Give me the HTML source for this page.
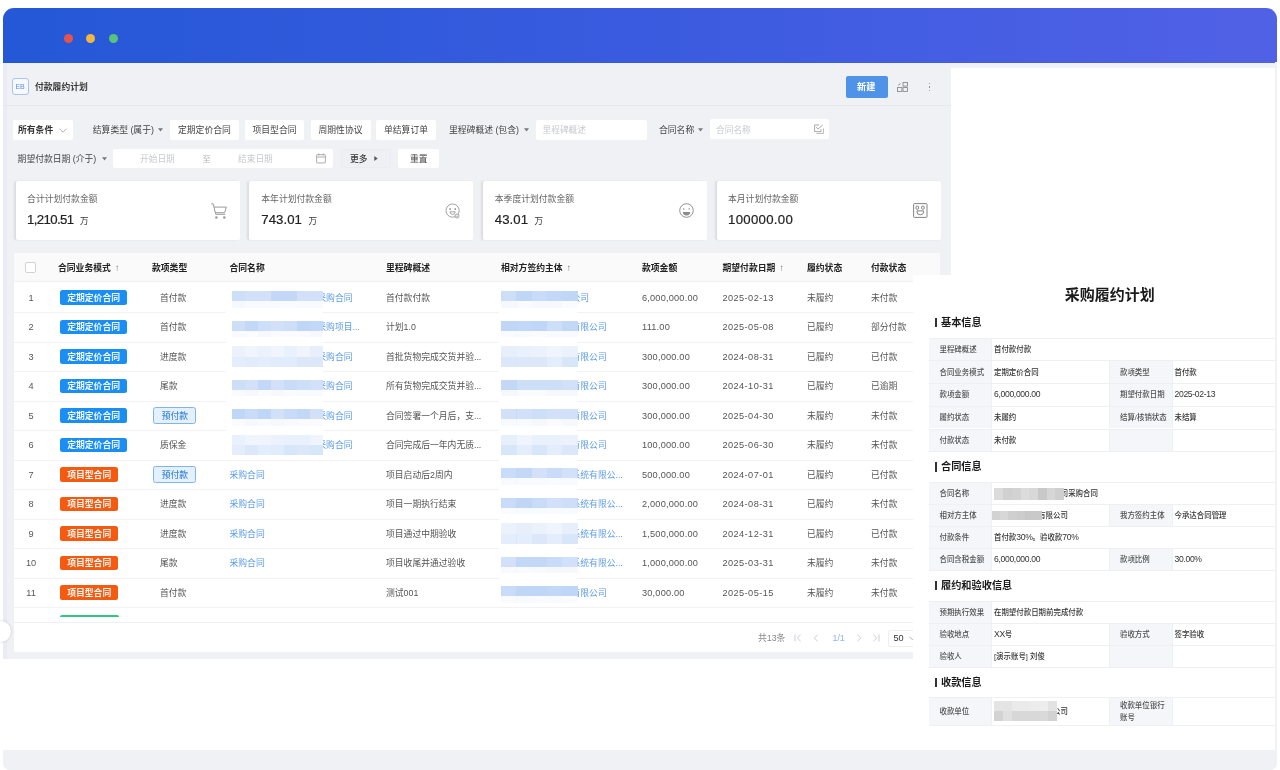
<!DOCTYPE html><html lang="zh-CN"><head><meta charset="utf-8"><title>付款履约计划</title><style>
*{box-sizing:border-box;margin:0;padding:0}
html,body{width:1280px;height:770px;overflow:hidden;background:#fff}
body{position:relative;filter:blur(0.35px);font-family:"Liberation Sans","Noto Sans CJK SC",sans-serif;font-size:8.8px;color:#555}
.t{position:absolute;white-space:nowrap}
.r{position:absolute}
svg{position:absolute;overflow:visible}
</style></head><body>
<div class="r" style="left:3px;top:8px;width:1274px;height:762px;background:#f1f2f6;border-radius:11px 11px 7px 7px;overflow:hidden"></div>
<div class="r" style="left:3px;top:8px;width:1274px;height:54.5px;background:linear-gradient(90deg,#2458d6 0%,#3a5bdf 50%,#5161e6 100%);border-radius:11px 11px 0 0"></div>
<div class="r" style="left:63.5px;top:33.5px;width:9px;height:9px;background:#e5544b;border-radius:50%"></div>
<div class="r" style="left:86.0px;top:33.5px;width:9px;height:9px;background:#f2b740;border-radius:50%"></div>
<div class="r" style="left:108.5px;top:33.5px;width:9px;height:9px;background:#5bc27a;border-radius:50%"></div>
<div class="r" style="left:951px;top:68px;width:324px;height:682px;background:#fff;"></div>
<div class="r" style="left:3px;top:659px;width:949px;height:91px;background:#fff;"></div>
<div class="r" style="left:3px;top:62.5px;width:948px;height:596.5px;background:#f0f1f5;"></div>
<div class="r" style="left:3px;top:62.5px;width:3.8px;height:596.5px;background:#eaebf6;"></div>
<div class="r" style="left:3px;top:750px;width:1274px;height:20px;background:#f0f1f5;border-radius:0 0 7px 7px"></div>
<div class="r" style="left:12px;top:78px;width:17px;height:17px;background:#f7f9fe;border:1px solid #a9c4ee;border-radius:3px"></div>
<div class="t " style="left:15.6px;top:81.60px;font-size:7px;color:#5b8fe6;font-weight:400;line-height:10px;letter-spacing:-0.2px">EB</div>
<div class="t " style="left:35px;top:79.80px;font-size:8.8px;color:#3c3c3c;font-weight:700;line-height:14px;">付款履约计划</div>
<div class="r" style="left:3px;top:105px;width:948px;height:1px;background:#e6e8ee;"></div>
<div class="r" style="left:845.5px;top:76px;width:42px;height:21.5px;background:#4f93e8;border-radius:2px"></div>
<div class="t " style="left:857px;top:79.60px;font-size:9.200000000000001px;color:#fff;font-weight:700;line-height:14px;">新建</div>
<svg style="left:897px;top:82px" width="11" height="10" viewBox="0 0 11 10" fill="none" stroke="#808080" stroke-width="0.8"><rect x="6" y="0.5" width="4.4" height="3.6"/><rect x="0.5" y="5.6" width="4.4" height="3.8"/><rect x="6" y="5.6" width="4.4" height="3.8"/><path d="M1 3.4 L3.6 1.6"/></svg>
<div class="r" style="left:928.6px;top:83.0px;width:1.3px;height:1.3px;background:#888;border-radius:50%"></div>
<div class="r" style="left:928.6px;top:86.4px;width:1.3px;height:1.3px;background:#888;border-radius:50%"></div>
<div class="r" style="left:928.6px;top:89.80000000000001px;width:1.3px;height:1.3px;background:#888;border-radius:50%"></div>
<div class="r" style="left:13px;top:119.8px;width:60px;height:19.8px;background:#fff;border-radius:2px;"></div>
<div class="t " style="left:18px;top:122.80px;font-size:8.8px;color:#333;font-weight:700;line-height:14px;">所有条件</div>
<svg style="left:58.5px;top:127.6px" width="8" height="5" viewBox="0 0 8 5" fill="none" stroke="#aaa" stroke-width="0.9"><path d="M0.5 0.7 L4 4.2 L7.5 0.7"/></svg>
<div class="t " style="left:92.8px;top:122.80px;font-size:8.8px;color:#444;font-weight:400;line-height:14px;">结算类型 (属于)</div>
<svg style="left:158px;top:128.2px" width="5" height="4" viewBox="0 0 5 4"><path d="M0 0.3h5L2.5 3.6z" fill="#777"/></svg>
<div class="r" style="left:170px;top:119.8px;width:68.5px;height:19.8px;background:#fff;border-radius:2px;"></div>
<div class="t " style="left:178px;top:122.80px;font-size:8.8px;color:#444;font-weight:400;line-height:14px;">定期定价合同</div>
<div class="r" style="left:244.5px;top:119.8px;width:59.5px;height:19.8px;background:#fff;border-radius:2px;"></div>
<div class="t " style="left:252.5px;top:122.80px;font-size:8.8px;color:#444;font-weight:400;line-height:14px;">项目型合同</div>
<div class="r" style="left:310.5px;top:119.8px;width:60px;height:19.8px;background:#fff;border-radius:2px;"></div>
<div class="t " style="left:318.5px;top:122.80px;font-size:8.8px;color:#444;font-weight:400;line-height:14px;">周期性协议</div>
<div class="r" style="left:376px;top:119.8px;width:60px;height:19.8px;background:#fff;border-radius:2px;"></div>
<div class="t " style="left:384px;top:122.80px;font-size:8.8px;color:#444;font-weight:400;line-height:14px;">单结算订单</div>
<div class="t " style="left:449px;top:122.80px;font-size:8.8px;color:#444;font-weight:400;line-height:14px;">里程碑概述 (包含)</div>
<svg style="left:524px;top:128.2px" width="5" height="4" viewBox="0 0 5 4"><path d="M0 0.3h5L2.5 3.6z" fill="#777"/></svg>
<div class="r" style="left:536px;top:119.8px;width:110.5px;height:19.8px;background:#fff;border-radius:2px;"></div>
<div class="t " style="left:542.5px;top:122.80px;font-size:8.700000000000001px;color:#c6c9cf;font-weight:400;line-height:14px;">里程碑概述</div>
<div class="t " style="left:659px;top:122.80px;font-size:8.8px;color:#444;font-weight:400;line-height:14px;">合同名称</div>
<svg style="left:698px;top:128.2px" width="5" height="4" viewBox="0 0 5 4"><path d="M0 0.3h5L2.5 3.6z" fill="#777"/></svg>
<div class="r" style="left:710px;top:119.4px;width:119px;height:19.4px;background:#fff;border-radius:2px;"></div>
<div class="t " style="left:716px;top:122.80px;font-size:8.700000000000001px;color:#c6c9cf;font-weight:400;line-height:14px;">合同名称</div>
<svg style="left:813.8px;top:123.6px" width="10" height="10" viewBox="0 0 10 10" fill="none" stroke="#a0a0a0" stroke-width="0.9"><path d="M7 5.2V7.6H0.6V0.9H5"/><path d="M2.2 3.2l1.7 2L8.6 1"/><path d="M2.4 9.4h7V4.4" stroke="#b0b0b0"/></svg>
<div class="t " style="left:17.6px;top:151.50px;font-size:8.8px;color:#444;font-weight:400;line-height:14px;">期望付款日期 (介于)</div>
<svg style="left:101.5px;top:157.2px" width="5" height="4" viewBox="0 0 5 4"><path d="M0 0.3h5L2.5 3.6z" fill="#777"/></svg>
<div class="r" style="left:113.4px;top:148.8px;width:219.4px;height:19.3px;background:#fff;border-radius:2px;"></div>
<div class="t " style="left:140px;top:151.50px;font-size:8.700000000000001px;color:#c6c9cf;font-weight:400;line-height:14px;">开始日期</div>
<div class="t " style="left:202.5px;top:151.50px;font-size:8.4px;color:#b0b3b9;font-weight:400;line-height:14px;">至</div>
<div class="t " style="left:238px;top:151.50px;font-size:8.700000000000001px;color:#c6c9cf;font-weight:400;line-height:14px;">结束日期</div>
<svg style="left:316px;top:153.4px" width="10" height="10.6" viewBox="0 0 10 10.6" fill="none" stroke="#999" stroke-width="0.8"><rect x="0.6" y="1.7" width="8.8" height="8.2" rx="0.6"/><path d="M0.6 4h8.8M2.8 0.4v2M7.2 0.4v2"/></svg>
<div class="r" style="left:341px;top:148.8px;width:50px;height:19.3px;background:#eff0f4;border-radius:2px;border:1px solid #eaecf1"></div>
<div class="t " style="left:350px;top:151.50px;font-size:8.8px;color:#3a3a3a;font-weight:500;line-height:14px;">更多</div>
<svg style="left:374px;top:156.4px" width="4" height="5" viewBox="0 0 4 5"><path d="M0.3 0L3.7 2.5L0.3 5z" fill="#555"/></svg>
<div class="r" style="left:398px;top:148.8px;width:41px;height:19.3px;background:#fff;border-radius:2px;"></div>
<div class="t " style="left:410px;top:151.50px;font-size:8.8px;color:#444;font-weight:400;line-height:14px;">重置</div>
<div class="r" style="left:15.6px;top:180.8px;width:224.4px;height:59.6px;background:#fff;border-radius:2px;box-shadow:-2px 0 2px -0.5px rgba(0,0,0,0.085)"></div>
<div class="t " style="left:27.1px;top:192.00px;font-size:8.8px;color:#666;font-weight:400;line-height:14px;">合计计划付款金额</div>
<div class="t" style="left:27.1px;top:211px;font-size:13.2px;color:#222;line-height:18px"><span style="letter-spacing:-0.62px;-webkit-text-stroke:0.2px #222">1,210.51</span><span style="font-size:8.6px;margin-left:6.5px;color:#333">万</span></div>
<div class="r" style="left:249px;top:180.8px;width:224.4px;height:59.6px;background:#fff;border-radius:2px;box-shadow:-2px 0 2px -0.5px rgba(0,0,0,0.085)"></div>
<div class="t " style="left:261.3px;top:192.00px;font-size:8.8px;color:#666;font-weight:400;line-height:14px;">本年计划付款金额</div>
<div class="t" style="left:261.3px;top:211px;font-size:13.2px;color:#222;line-height:18px"><span style="letter-spacing:0.05px;-webkit-text-stroke:0.2px #222">743.01</span><span style="font-size:8.6px;margin-left:6.5px;color:#333">万</span></div>
<div class="r" style="left:482.5px;top:180.8px;width:224.4px;height:59.6px;background:#fff;border-radius:2px;box-shadow:-2px 0 2px -0.5px rgba(0,0,0,0.085)"></div>
<div class="t " style="left:494.8px;top:192.00px;font-size:8.8px;color:#666;font-weight:400;line-height:14px;">本季度计划付款金额</div>
<div class="t" style="left:494.8px;top:211px;font-size:13.2px;color:#222;line-height:18px"><span style="letter-spacing:0.05px;-webkit-text-stroke:0.2px #222">43.01</span><span style="font-size:8.6px;margin-left:6.5px;color:#333">万</span></div>
<div class="r" style="left:716.5px;top:180.8px;width:224.4px;height:59.6px;background:#fff;border-radius:2px;box-shadow:-2px 0 2px -0.5px rgba(0,0,0,0.085)"></div>
<div class="t " style="left:728.0px;top:192.00px;font-size:8.8px;color:#666;font-weight:400;line-height:14px;">本月计划付款金额</div>
<div class="t" style="left:728.0px;top:211px;font-size:13.2px;color:#222;line-height:18px"><span style="letter-spacing:0.3px;-webkit-text-stroke:0.2px #222">100000.00</span><span style="font-size:8.6px;margin-left:6.5px;color:#333"></span></div>
<svg style="left:210.5px;top:203px" width="16" height="16" viewBox="0 0 16 16" fill="none" stroke="#9a9a9a" stroke-width="1"><path d="M0.2 0.8h1.9l2.7 10.5h9.4"/><path d="M3 4.1h12.4l-1.8 5.6H4.4"/><circle cx="5.4" cy="14.6" r="1.25" fill="#9a9a9a" stroke="none"/><circle cx="13.3" cy="14.6" r="1.25" fill="#9a9a9a" stroke="none"/></svg>
<svg style="left:444.5px;top:202.5px" width="16" height="16" viewBox="0 0 16 16" fill="none" stroke="#9a9a9a" stroke-width="0.9"><circle cx="7.6" cy="7.6" r="6.6"/><path d="M5 8.8a2.6 2.6 0 0 0 5.2 0z"/><circle cx="5.1" cy="6" r="0.85" fill="#777" stroke="none"/><circle cx="10.2" cy="6" r="0.85" fill="#777" stroke="none"/><circle cx="12" cy="13" r="2" fill="#fff"/><circle cx="12" cy="13.2" r="0.6" fill="#888" stroke="none"/></svg>
<svg style="left:678.5px;top:202.8px" width="15" height="15" viewBox="0 0 15 15" fill="none" stroke="#8c8c8c" stroke-width="0.95"><circle cx="7.5" cy="7.5" r="6.8"/><path d="M3.8 9a3.7 3.4 0 0 0 7.4 0z" fill="#8c8c8c" stroke="none"/><circle cx="4.7" cy="5.9" r="0.7" fill="#777" stroke="none"/><circle cx="10.2" cy="5.9" r="0.7" fill="#777" stroke="none"/></svg>
<svg style="left:912.6px;top:203.3px" width="15" height="15" viewBox="0 0 15 15" fill="none" stroke="#7d7d7d" stroke-width="0.95"><rect x="0.6" y="0.6" width="13.4" height="13.8" rx="0.8"/><rect x="3" y="3.2" width="2.6" height="3" rx="0.8"/><rect x="8.6" y="3.2" width="2.6" height="3" rx="0.8"/><path d="M4 7.9h6.6v1.1a3.3 2.8 0 0 1-6.6 0z"/></svg>
<div class="r" style="left:13.5px;top:253px;width:926.5px;height:399px;background:#fff;border-radius:2px"></div>
<div class="r" style="left:13.5px;top:253px;width:926.5px;height:28.3px;background:#fafafa;"></div>
<div class="r" style="left:13.5px;top:281.2px;width:926.5px;height:1px;background:#f1f1f4;"></div>
<div class="r" style="left:25px;top:262px;width:10.8px;height:10.8px;background:#fff;border:1px solid #cfd2d8;border-radius:2px"></div>
<div class="t " style="left:58px;top:261.00px;font-size:8.8px;color:#222;font-weight:700;line-height:14px;">合同业务模式<span style="font-weight:400;color:#888;margin-left:4px;font-size:9.5px;color:#777">↑</span></div>
<div class="t " style="left:152px;top:261.00px;font-size:8.8px;color:#222;font-weight:700;line-height:14px;">款项类型</div>
<div class="t " style="left:229.5px;top:261.00px;font-size:8.8px;color:#222;font-weight:700;line-height:14px;">合同名称</div>
<div class="t " style="left:386px;top:261.00px;font-size:8.8px;color:#222;font-weight:700;line-height:14px;">里程碑概述</div>
<div class="t " style="left:501px;top:261.00px;font-size:8.8px;color:#222;font-weight:700;line-height:14px;">相对方签约主体<span style="font-weight:400;color:#888;margin-left:4px;font-size:9.5px;color:#777">↑</span></div>
<div class="t " style="left:642px;top:261.00px;font-size:8.8px;color:#222;font-weight:700;line-height:14px;">款项金额</div>
<div class="t " style="left:722.5px;top:261.00px;font-size:8.8px;color:#222;font-weight:700;line-height:14px;">期望付款日期<span style="font-weight:400;color:#888;margin-left:4px;font-size:9.5px;color:#777">↑</span></div>
<div class="t " style="left:807px;top:261.00px;font-size:8.8px;color:#222;font-weight:700;line-height:14px;">履约状态</div>
<div class="t " style="left:871px;top:261.00px;font-size:8.8px;color:#222;font-weight:700;line-height:14px;">付款状态</div>
<div class="r" style="left:13.5px;top:312.2px;width:926.5px;height:1px;background:#f2f2f5;"></div>
<div class="t " style="left:31px;top:290.80px;font-size:9.2px;color:#555;font-weight:400;line-height:14px;transform:translateX(-50%)">1</div>
<div class="r" style="left:60px;top:290.40000000000003px;width:67.3px;height:14.4px;background:#1a8ef2;border-radius:2.5px"></div>
<div class="t " style="left:67.2px;top:290.60px;font-size:8.8px;color:rgba(255,255,255,0.93);font-weight:700;line-height:14px;">定期定价合同</div>
<div class="t " style="left:160px;top:290.80px;font-size:8.8px;color:#555;font-weight:400;line-height:14px;">首付款</div>
<div class="t " style="left:317.3px;top:290.80px;font-size:8.8px;color:#5b9bea;font-weight:400;line-height:14px;">采购合同</div>
<div class="r" style="left:226px;top:283.8px;width:97.2px;height:29.4px;background:#fff;"></div>
<div class="r" style="left:232.0px;top:291.2px;width:13.3px;height:10.2px;background:rgba(192,214,247,0.8);"></div>
<div class="r" style="left:232.0px;top:301.40000000000003px;width:13.3px;height:6.4px;background:rgba(238,243,252,0.6);"></div>
<div class="r" style="left:245.0px;top:291.2px;width:13.3px;height:10.2px;background:rgba(192,214,247,0.72);"></div>
<div class="r" style="left:245.0px;top:301.40000000000003px;width:13.3px;height:6.4px;background:rgba(238,243,252,0.45);"></div>
<div class="r" style="left:258.0px;top:291.2px;width:13.3px;height:10.2px;background:rgba(192,214,247,0.72);"></div>
<div class="r" style="left:258.0px;top:301.40000000000003px;width:13.3px;height:6.4px;background:rgba(238,243,252,0.45);"></div>
<div class="r" style="left:271.0px;top:291.2px;width:13.3px;height:10.2px;background:rgba(192,214,247,0.95);"></div>
<div class="r" style="left:271.0px;top:301.40000000000003px;width:13.3px;height:6.4px;background:rgba(238,243,252,0.45);"></div>
<div class="r" style="left:284.0px;top:291.2px;width:13.3px;height:10.2px;background:rgba(192,214,247,0.95);"></div>
<div class="r" style="left:284.0px;top:301.40000000000003px;width:13.3px;height:6.4px;background:rgba(238,243,252,0.3);"></div>
<div class="r" style="left:297.0px;top:291.2px;width:13.3px;height:10.2px;background:rgba(192,214,247,0.72);"></div>
<div class="r" style="left:297.0px;top:301.40000000000003px;width:13.3px;height:6.4px;background:rgba(238,243,252,0.45);"></div>
<div class="r" style="left:310.0px;top:291.2px;width:13.3px;height:10.2px;background:rgba(192,214,247,0.72);"></div>
<div class="r" style="left:310.0px;top:301.40000000000003px;width:13.3px;height:6.4px;background:rgba(238,243,252,0.45);"></div>
<div class="t " style="left:386px;top:290.80px;font-size:8.8px;color:#555;font-weight:400;line-height:14px;">首付款付款</div>
<div class="t " style="left:571.5px;top:290.80px;font-size:8.8px;color:#5b9bea;font-weight:400;line-height:14px;">公司</div>
<div class="r" style="left:499px;top:283.8px;width:78.3px;height:29.4px;background:#fff;"></div>
<div class="r" style="left:501.0px;top:291.2px;width:15.56px;height:10.2px;background:rgba(192,214,247,0.8);"></div>
<div class="r" style="left:501.0px;top:301.40000000000003px;width:15.56px;height:6.4px;background:rgba(238,243,252,0.6);"></div>
<div class="r" style="left:516.26px;top:291.2px;width:15.56px;height:10.2px;background:rgba(192,214,247,1.0);"></div>
<div class="r" style="left:516.26px;top:301.40000000000003px;width:15.56px;height:6.4px;background:rgba(238,243,252,0.3);"></div>
<div class="r" style="left:531.52px;top:291.2px;width:15.56px;height:10.2px;background:rgba(192,214,247,0.88);"></div>
<div class="r" style="left:531.52px;top:301.40000000000003px;width:15.56px;height:6.4px;background:rgba(238,243,252,0.6);"></div>
<div class="r" style="left:546.78px;top:291.2px;width:15.56px;height:10.2px;background:rgba(192,214,247,0.95);"></div>
<div class="r" style="left:546.78px;top:301.40000000000003px;width:15.56px;height:6.4px;background:rgba(238,243,252,0.6);"></div>
<div class="r" style="left:562.04px;top:291.2px;width:15.56px;height:10.2px;background:rgba(192,214,247,1.0);"></div>
<div class="r" style="left:562.04px;top:301.40000000000003px;width:15.56px;height:6.4px;background:rgba(238,243,252,0.3);"></div>
<div class="t " style="left:642px;top:290.80px;font-size:9.2px;color:#555;font-weight:400;line-height:14px;letter-spacing:0.2px">6,000,000.00</div>
<div class="t " style="left:722.5px;top:290.80px;font-size:9.2px;color:#555;font-weight:400;line-height:14px;letter-spacing:0.42px">2025-02-13</div>
<div class="t " style="left:807px;top:290.80px;font-size:8.8px;color:#555;font-weight:400;line-height:14px;">未履约</div>
<div class="t " style="left:871px;top:290.80px;font-size:8.8px;color:#555;font-weight:400;line-height:14px;">未付款</div>
<div class="r" style="left:13.5px;top:341.7px;width:926.5px;height:1px;background:#f2f2f5;"></div>
<div class="t " style="left:31px;top:320.30px;font-size:9.2px;color:#555;font-weight:400;line-height:14px;transform:translateX(-50%)">2</div>
<div class="r" style="left:60px;top:319.90000000000003px;width:67.3px;height:14.4px;background:#1a8ef2;border-radius:2.5px"></div>
<div class="t " style="left:67.2px;top:320.10px;font-size:8.8px;color:rgba(255,255,255,0.93);font-weight:700;line-height:14px;">定期定价合同</div>
<div class="t " style="left:160px;top:320.30px;font-size:8.8px;color:#555;font-weight:400;line-height:14px;">首付款</div>
<div class="t " style="left:317.3px;top:320.30px;font-size:8.8px;color:#5b9bea;font-weight:400;line-height:14px;">采购项目...</div>
<div class="r" style="left:226px;top:313.3px;width:97.2px;height:29.4px;background:#fff;"></div>
<div class="r" style="left:232.0px;top:320.7px;width:13.3px;height:10.2px;background:rgba(192,214,247,0.8);"></div>
<div class="r" style="left:232.0px;top:330.90000000000003px;width:13.3px;height:6.4px;background:rgba(238,243,252,0.45);"></div>
<div class="r" style="left:245.0px;top:320.7px;width:13.3px;height:10.2px;background:rgba(192,214,247,0.95);"></div>
<div class="r" style="left:245.0px;top:330.90000000000003px;width:13.3px;height:6.4px;background:rgba(238,243,252,0.3);"></div>
<div class="r" style="left:258.0px;top:320.7px;width:13.3px;height:10.2px;background:rgba(192,214,247,0.8);"></div>
<div class="r" style="left:258.0px;top:330.90000000000003px;width:13.3px;height:6.4px;background:rgba(238,243,252,0.6);"></div>
<div class="r" style="left:271.0px;top:320.7px;width:13.3px;height:10.2px;background:rgba(192,214,247,0.72);"></div>
<div class="r" style="left:271.0px;top:330.90000000000003px;width:13.3px;height:6.4px;background:rgba(238,243,252,0.3);"></div>
<div class="r" style="left:284.0px;top:320.7px;width:13.3px;height:10.2px;background:rgba(192,214,247,0.8);"></div>
<div class="r" style="left:284.0px;top:330.90000000000003px;width:13.3px;height:6.4px;background:rgba(238,243,252,0.3);"></div>
<div class="r" style="left:297.0px;top:320.7px;width:13.3px;height:10.2px;background:rgba(192,214,247,1.0);"></div>
<div class="r" style="left:297.0px;top:330.90000000000003px;width:13.3px;height:6.4px;background:rgba(238,243,252,0.3);"></div>
<div class="r" style="left:310.0px;top:320.7px;width:13.3px;height:10.2px;background:rgba(192,214,247,0.95);"></div>
<div class="r" style="left:310.0px;top:330.90000000000003px;width:13.3px;height:6.4px;background:rgba(238,243,252,0.6);"></div>
<div class="t " style="left:386px;top:320.30px;font-size:8.8px;color:#555;font-weight:400;line-height:14px;">计划1.0</div>
<div class="t " style="left:571.5px;top:320.30px;font-size:8.8px;color:#5b9bea;font-weight:400;line-height:14px;">有限公司</div>
<div class="r" style="left:499px;top:313.3px;width:78.3px;height:29.4px;background:#fff;"></div>
<div class="r" style="left:501.0px;top:320.7px;width:15.56px;height:10.2px;background:rgba(192,214,247,1.0);"></div>
<div class="r" style="left:501.0px;top:330.90000000000003px;width:15.56px;height:6.4px;background:rgba(238,243,252,0.3);"></div>
<div class="r" style="left:516.26px;top:320.7px;width:15.56px;height:10.2px;background:rgba(192,214,247,0.95);"></div>
<div class="r" style="left:516.26px;top:330.90000000000003px;width:15.56px;height:6.4px;background:rgba(238,243,252,0.45);"></div>
<div class="r" style="left:531.52px;top:320.7px;width:15.56px;height:10.2px;background:rgba(192,214,247,1.0);"></div>
<div class="r" style="left:531.52px;top:330.90000000000003px;width:15.56px;height:6.4px;background:rgba(238,243,252,0.3);"></div>
<div class="r" style="left:546.78px;top:320.7px;width:15.56px;height:10.2px;background:rgba(192,214,247,0.8);"></div>
<div class="r" style="left:546.78px;top:330.90000000000003px;width:15.56px;height:6.4px;background:rgba(238,243,252,0.45);"></div>
<div class="r" style="left:562.04px;top:320.7px;width:15.56px;height:10.2px;background:rgba(192,214,247,0.95);"></div>
<div class="r" style="left:562.04px;top:330.90000000000003px;width:15.56px;height:6.4px;background:rgba(238,243,252,0.45);"></div>
<div class="t " style="left:642px;top:320.30px;font-size:9.2px;color:#555;font-weight:400;line-height:14px;letter-spacing:0.2px">111.00</div>
<div class="t " style="left:722.5px;top:320.30px;font-size:9.2px;color:#555;font-weight:400;line-height:14px;letter-spacing:0.42px">2025-05-08</div>
<div class="t " style="left:807px;top:320.30px;font-size:8.8px;color:#555;font-weight:400;line-height:14px;">已履约</div>
<div class="t " style="left:871px;top:320.30px;font-size:8.8px;color:#555;font-weight:400;line-height:14px;">部分付款</div>
<div class="r" style="left:13.5px;top:371.2px;width:926.5px;height:1px;background:#f2f2f5;"></div>
<div class="t " style="left:31px;top:349.80px;font-size:9.2px;color:#555;font-weight:400;line-height:14px;transform:translateX(-50%)">3</div>
<div class="r" style="left:60px;top:349.40000000000003px;width:67.3px;height:14.4px;background:#1a8ef2;border-radius:2.5px"></div>
<div class="t " style="left:67.2px;top:349.60px;font-size:8.8px;color:rgba(255,255,255,0.93);font-weight:700;line-height:14px;">定期定价合同</div>
<div class="t " style="left:160px;top:349.80px;font-size:8.8px;color:#555;font-weight:400;line-height:14px;">进度款</div>
<div class="t " style="left:317.3px;top:349.80px;font-size:8.8px;color:#5b9bea;font-weight:400;line-height:14px;">采购合同</div>
<div class="r" style="left:226px;top:342.8px;width:97.2px;height:29.4px;background:#fff;"></div>
<div class="r" style="left:232.0px;top:346.2px;width:13.3px;height:10.4px;background:rgba(228,237,251,0.7);"></div>
<div class="r" style="left:232.0px;top:356.6px;width:13.3px;height:10.4px;background:rgba(216,230,250,0.7);"></div>
<div class="r" style="left:245.0px;top:346.2px;width:13.3px;height:10.4px;background:rgba(228,237,251,0.6);"></div>
<div class="r" style="left:245.0px;top:356.6px;width:13.3px;height:10.4px;background:rgba(216,230,250,0.8);"></div>
<div class="r" style="left:258.0px;top:346.2px;width:13.3px;height:10.4px;background:rgba(228,237,251,0.7);"></div>
<div class="r" style="left:258.0px;top:356.6px;width:13.3px;height:10.4px;background:rgba(216,230,250,0.7);"></div>
<div class="r" style="left:271.0px;top:346.2px;width:13.3px;height:10.4px;background:rgba(228,237,251,0.6);"></div>
<div class="r" style="left:271.0px;top:356.6px;width:13.3px;height:10.4px;background:rgba(216,230,250,0.8);"></div>
<div class="r" style="left:284.0px;top:346.2px;width:13.3px;height:10.4px;background:rgba(228,237,251,0.8);"></div>
<div class="r" style="left:284.0px;top:356.6px;width:13.3px;height:10.4px;background:rgba(216,230,250,0.8);"></div>
<div class="r" style="left:297.0px;top:346.2px;width:13.3px;height:10.4px;background:rgba(228,237,251,0.6);"></div>
<div class="r" style="left:297.0px;top:356.6px;width:13.3px;height:10.4px;background:rgba(216,230,250,0.9);"></div>
<div class="r" style="left:310.0px;top:346.2px;width:13.3px;height:10.4px;background:rgba(228,237,251,0.9);"></div>
<div class="r" style="left:310.0px;top:356.6px;width:13.3px;height:10.4px;background:rgba(216,230,250,0.9);"></div>
<div class="t " style="left:386px;top:349.80px;font-size:8.8px;color:#555;font-weight:400;line-height:14px;">首批货物完成交货并验...</div>
<div class="t " style="left:571.5px;top:349.80px;font-size:8.8px;color:#5b9bea;font-weight:400;line-height:14px;">有限公司</div>
<div class="r" style="left:499px;top:342.8px;width:78.3px;height:29.4px;background:#fff;"></div>
<div class="r" style="left:501.0px;top:346.2px;width:15.56px;height:10.4px;background:rgba(228,237,251,0.9);"></div>
<div class="r" style="left:501.0px;top:356.6px;width:15.56px;height:10.4px;background:rgba(216,230,250,0.9);"></div>
<div class="r" style="left:516.26px;top:346.2px;width:15.56px;height:10.4px;background:rgba(228,237,251,0.8);"></div>
<div class="r" style="left:516.26px;top:356.6px;width:15.56px;height:10.4px;background:rgba(216,230,250,0.9);"></div>
<div class="r" style="left:531.52px;top:346.2px;width:15.56px;height:10.4px;background:rgba(228,237,251,0.7);"></div>
<div class="r" style="left:531.52px;top:356.6px;width:15.56px;height:10.4px;background:rgba(216,230,250,0.9);"></div>
<div class="r" style="left:546.78px;top:346.2px;width:15.56px;height:10.4px;background:rgba(228,237,251,0.6);"></div>
<div class="r" style="left:546.78px;top:356.6px;width:15.56px;height:10.4px;background:rgba(216,230,250,0.7);"></div>
<div class="r" style="left:562.04px;top:346.2px;width:15.56px;height:10.4px;background:rgba(228,237,251,0.7);"></div>
<div class="r" style="left:562.04px;top:356.6px;width:15.56px;height:10.4px;background:rgba(216,230,250,1.0);"></div>
<div class="t " style="left:642px;top:349.80px;font-size:9.2px;color:#555;font-weight:400;line-height:14px;letter-spacing:0.2px">300,000.00</div>
<div class="t " style="left:722.5px;top:349.80px;font-size:9.2px;color:#555;font-weight:400;line-height:14px;letter-spacing:0.42px">2024-08-31</div>
<div class="t " style="left:807px;top:349.80px;font-size:8.8px;color:#555;font-weight:400;line-height:14px;">已履约</div>
<div class="t " style="left:871px;top:349.80px;font-size:8.8px;color:#555;font-weight:400;line-height:14px;">已付款</div>
<div class="r" style="left:13.5px;top:400.7px;width:926.5px;height:1px;background:#f2f2f5;"></div>
<div class="t " style="left:31px;top:379.30px;font-size:9.2px;color:#555;font-weight:400;line-height:14px;transform:translateX(-50%)">4</div>
<div class="r" style="left:60px;top:378.90000000000003px;width:67.3px;height:14.4px;background:#1a8ef2;border-radius:2.5px"></div>
<div class="t " style="left:67.2px;top:379.10px;font-size:8.8px;color:rgba(255,255,255,0.93);font-weight:700;line-height:14px;">定期定价合同</div>
<div class="t " style="left:160px;top:379.30px;font-size:8.8px;color:#555;font-weight:400;line-height:14px;">尾款</div>
<div class="t " style="left:317.3px;top:379.30px;font-size:8.8px;color:#5b9bea;font-weight:400;line-height:14px;">采购合同</div>
<div class="r" style="left:226px;top:372.3px;width:97.2px;height:29.4px;background:#fff;"></div>
<div class="r" style="left:232.0px;top:379.7px;width:13.3px;height:10.2px;background:rgba(192,214,247,0.8);"></div>
<div class="r" style="left:232.0px;top:389.90000000000003px;width:13.3px;height:6.4px;background:rgba(238,243,252,0.3);"></div>
<div class="r" style="left:245.0px;top:379.7px;width:13.3px;height:10.2px;background:rgba(192,214,247,0.72);"></div>
<div class="r" style="left:245.0px;top:389.90000000000003px;width:13.3px;height:6.4px;background:rgba(238,243,252,0.6);"></div>
<div class="r" style="left:258.0px;top:379.7px;width:13.3px;height:10.2px;background:rgba(192,214,247,0.95);"></div>
<div class="r" style="left:258.0px;top:389.90000000000003px;width:13.3px;height:6.4px;background:rgba(238,243,252,0.3);"></div>
<div class="r" style="left:271.0px;top:379.7px;width:13.3px;height:10.2px;background:rgba(192,214,247,0.72);"></div>
<div class="r" style="left:271.0px;top:389.90000000000003px;width:13.3px;height:6.4px;background:rgba(238,243,252,0.6);"></div>
<div class="r" style="left:284.0px;top:379.7px;width:13.3px;height:10.2px;background:rgba(192,214,247,0.88);"></div>
<div class="r" style="left:284.0px;top:389.90000000000003px;width:13.3px;height:6.4px;background:rgba(238,243,252,0.3);"></div>
<div class="r" style="left:297.0px;top:379.7px;width:13.3px;height:10.2px;background:rgba(192,214,247,0.8);"></div>
<div class="r" style="left:297.0px;top:389.90000000000003px;width:13.3px;height:6.4px;background:rgba(238,243,252,0.45);"></div>
<div class="r" style="left:310.0px;top:379.7px;width:13.3px;height:10.2px;background:rgba(192,214,247,0.72);"></div>
<div class="r" style="left:310.0px;top:389.90000000000003px;width:13.3px;height:6.4px;background:rgba(238,243,252,0.45);"></div>
<div class="t " style="left:386px;top:379.30px;font-size:8.8px;color:#555;font-weight:400;line-height:14px;">所有货物完成交货并验...</div>
<div class="t " style="left:571.5px;top:379.30px;font-size:8.8px;color:#5b9bea;font-weight:400;line-height:14px;">有限公司</div>
<div class="r" style="left:499px;top:372.3px;width:78.3px;height:29.4px;background:#fff;"></div>
<div class="r" style="left:501.0px;top:379.7px;width:15.56px;height:10.2px;background:rgba(192,214,247,0.95);"></div>
<div class="r" style="left:501.0px;top:389.90000000000003px;width:15.56px;height:6.4px;background:rgba(238,243,252,0.6);"></div>
<div class="r" style="left:516.26px;top:379.7px;width:15.56px;height:10.2px;background:rgba(192,214,247,0.8);"></div>
<div class="r" style="left:516.26px;top:389.90000000000003px;width:15.56px;height:6.4px;background:rgba(238,243,252,0.3);"></div>
<div class="r" style="left:531.52px;top:379.7px;width:15.56px;height:10.2px;background:rgba(192,214,247,0.8);"></div>
<div class="r" style="left:531.52px;top:389.90000000000003px;width:15.56px;height:6.4px;background:rgba(238,243,252,0.3);"></div>
<div class="r" style="left:546.78px;top:379.7px;width:15.56px;height:10.2px;background:rgba(192,214,247,0.8);"></div>
<div class="r" style="left:546.78px;top:389.90000000000003px;width:15.56px;height:6.4px;background:rgba(238,243,252,0.6);"></div>
<div class="r" style="left:562.04px;top:379.7px;width:15.56px;height:10.2px;background:rgba(192,214,247,0.72);"></div>
<div class="r" style="left:562.04px;top:389.90000000000003px;width:15.56px;height:6.4px;background:rgba(238,243,252,0.6);"></div>
<div class="t " style="left:642px;top:379.30px;font-size:9.2px;color:#555;font-weight:400;line-height:14px;letter-spacing:0.2px">300,000.00</div>
<div class="t " style="left:722.5px;top:379.30px;font-size:9.2px;color:#555;font-weight:400;line-height:14px;letter-spacing:0.42px">2024-10-31</div>
<div class="t " style="left:807px;top:379.30px;font-size:8.8px;color:#555;font-weight:400;line-height:14px;">已履约</div>
<div class="t " style="left:871px;top:379.30px;font-size:8.8px;color:#555;font-weight:400;line-height:14px;">已逾期</div>
<div class="r" style="left:13.5px;top:430.2px;width:926.5px;height:1px;background:#f2f2f5;"></div>
<div class="t " style="left:31px;top:408.80px;font-size:9.2px;color:#555;font-weight:400;line-height:14px;transform:translateX(-50%)">5</div>
<div class="r" style="left:60px;top:408.40000000000003px;width:67.3px;height:14.4px;background:#1a8ef2;border-radius:2.5px"></div>
<div class="t " style="left:67.2px;top:408.60px;font-size:8.8px;color:rgba(255,255,255,0.93);font-weight:700;line-height:14px;">定期定价合同</div>
<div class="r" style="left:153.1px;top:407.2px;width:43.1px;height:16.6px;background:#e3f0fd;border:1px solid #82b4e8;border-radius:2.5px"></div>
<div class="t " style="left:161.7px;top:408.60px;font-size:8.8px;color:#428ad8;font-weight:500;line-height:14px;">预付款</div>
<div class="t " style="left:317.3px;top:408.80px;font-size:8.8px;color:#5b9bea;font-weight:400;line-height:14px;">采购合同</div>
<div class="r" style="left:226px;top:401.8px;width:97.2px;height:29.4px;background:#fff;"></div>
<div class="r" style="left:232.0px;top:409.2px;width:13.3px;height:10.2px;background:rgba(192,214,247,1.0);"></div>
<div class="r" style="left:232.0px;top:419.40000000000003px;width:13.3px;height:6.4px;background:rgba(238,243,252,0.3);"></div>
<div class="r" style="left:245.0px;top:409.2px;width:13.3px;height:10.2px;background:rgba(192,214,247,0.88);"></div>
<div class="r" style="left:245.0px;top:419.40000000000003px;width:13.3px;height:6.4px;background:rgba(238,243,252,0.6);"></div>
<div class="r" style="left:258.0px;top:409.2px;width:13.3px;height:10.2px;background:rgba(192,214,247,1.0);"></div>
<div class="r" style="left:258.0px;top:419.40000000000003px;width:13.3px;height:6.4px;background:rgba(238,243,252,0.45);"></div>
<div class="r" style="left:271.0px;top:409.2px;width:13.3px;height:10.2px;background:rgba(192,214,247,0.72);"></div>
<div class="r" style="left:271.0px;top:419.40000000000003px;width:13.3px;height:6.4px;background:rgba(238,243,252,0.6);"></div>
<div class="r" style="left:284.0px;top:409.2px;width:13.3px;height:10.2px;background:rgba(192,214,247,0.88);"></div>
<div class="r" style="left:284.0px;top:419.40000000000003px;width:13.3px;height:6.4px;background:rgba(238,243,252,0.45);"></div>
<div class="r" style="left:297.0px;top:409.2px;width:13.3px;height:10.2px;background:rgba(192,214,247,0.95);"></div>
<div class="r" style="left:297.0px;top:419.40000000000003px;width:13.3px;height:6.4px;background:rgba(238,243,252,0.3);"></div>
<div class="r" style="left:310.0px;top:409.2px;width:13.3px;height:10.2px;background:rgba(192,214,247,0.72);"></div>
<div class="r" style="left:310.0px;top:419.40000000000003px;width:13.3px;height:6.4px;background:rgba(238,243,252,0.3);"></div>
<div class="t " style="left:386px;top:408.80px;font-size:8.8px;color:#555;font-weight:400;line-height:14px;">合同签署一个月后，支...</div>
<div class="t " style="left:571.5px;top:408.80px;font-size:8.8px;color:#5b9bea;font-weight:400;line-height:14px;">有限公司</div>
<div class="r" style="left:499px;top:401.8px;width:78.3px;height:29.4px;background:#fff;"></div>
<div class="r" style="left:501.0px;top:409.2px;width:15.56px;height:10.2px;background:rgba(192,214,247,0.72);"></div>
<div class="r" style="left:501.0px;top:419.40000000000003px;width:15.56px;height:6.4px;background:rgba(238,243,252,0.45);"></div>
<div class="r" style="left:516.26px;top:409.2px;width:15.56px;height:10.2px;background:rgba(192,214,247,0.72);"></div>
<div class="r" style="left:516.26px;top:419.40000000000003px;width:15.56px;height:6.4px;background:rgba(238,243,252,0.45);"></div>
<div class="r" style="left:531.52px;top:409.2px;width:15.56px;height:10.2px;background:rgba(192,214,247,0.8);"></div>
<div class="r" style="left:531.52px;top:419.40000000000003px;width:15.56px;height:6.4px;background:rgba(238,243,252,0.6);"></div>
<div class="r" style="left:546.78px;top:409.2px;width:15.56px;height:10.2px;background:rgba(192,214,247,0.72);"></div>
<div class="r" style="left:546.78px;top:419.40000000000003px;width:15.56px;height:6.4px;background:rgba(238,243,252,0.3);"></div>
<div class="r" style="left:562.04px;top:409.2px;width:15.56px;height:10.2px;background:rgba(192,214,247,0.72);"></div>
<div class="r" style="left:562.04px;top:419.40000000000003px;width:15.56px;height:6.4px;background:rgba(238,243,252,0.6);"></div>
<div class="t " style="left:642px;top:408.80px;font-size:9.2px;color:#555;font-weight:400;line-height:14px;letter-spacing:0.2px">300,000.00</div>
<div class="t " style="left:722.5px;top:408.80px;font-size:9.2px;color:#555;font-weight:400;line-height:14px;letter-spacing:0.42px">2025-04-30</div>
<div class="t " style="left:807px;top:408.80px;font-size:8.8px;color:#555;font-weight:400;line-height:14px;">未履约</div>
<div class="t " style="left:871px;top:408.80px;font-size:8.8px;color:#555;font-weight:400;line-height:14px;">未付款</div>
<div class="r" style="left:13.5px;top:459.7px;width:926.5px;height:1px;background:#f2f2f5;"></div>
<div class="t " style="left:31px;top:438.30px;font-size:9.2px;color:#555;font-weight:400;line-height:14px;transform:translateX(-50%)">6</div>
<div class="r" style="left:60px;top:437.90000000000003px;width:67.3px;height:14.4px;background:#1a8ef2;border-radius:2.5px"></div>
<div class="t " style="left:67.2px;top:438.10px;font-size:8.8px;color:rgba(255,255,255,0.93);font-weight:700;line-height:14px;">定期定价合同</div>
<div class="t " style="left:160px;top:438.30px;font-size:8.8px;color:#555;font-weight:400;line-height:14px;">质保金</div>
<div class="t " style="left:317.3px;top:438.30px;font-size:8.8px;color:#5b9bea;font-weight:400;line-height:14px;">采购合同</div>
<div class="r" style="left:226px;top:431.3px;width:97.2px;height:27.5px;background:#fff;"></div>
<div class="r" style="left:232.0px;top:434.7px;width:13.3px;height:10.4px;background:rgba(228,237,251,0.8);"></div>
<div class="r" style="left:232.0px;top:445.1px;width:13.3px;height:10.4px;background:rgba(216,230,250,0.7);"></div>
<div class="r" style="left:245.0px;top:434.7px;width:13.3px;height:10.4px;background:rgba(228,237,251,0.6);"></div>
<div class="r" style="left:245.0px;top:445.1px;width:13.3px;height:10.4px;background:rgba(216,230,250,0.9);"></div>
<div class="r" style="left:258.0px;top:434.7px;width:13.3px;height:10.4px;background:rgba(228,237,251,0.6);"></div>
<div class="r" style="left:258.0px;top:445.1px;width:13.3px;height:10.4px;background:rgba(216,230,250,0.7);"></div>
<div class="r" style="left:271.0px;top:434.7px;width:13.3px;height:10.4px;background:rgba(228,237,251,0.7);"></div>
<div class="r" style="left:271.0px;top:445.1px;width:13.3px;height:10.4px;background:rgba(216,230,250,0.8);"></div>
<div class="r" style="left:284.0px;top:434.7px;width:13.3px;height:10.4px;background:rgba(228,237,251,0.8);"></div>
<div class="r" style="left:284.0px;top:445.1px;width:13.3px;height:10.4px;background:rgba(216,230,250,1.0);"></div>
<div class="r" style="left:297.0px;top:434.7px;width:13.3px;height:10.4px;background:rgba(228,237,251,0.8);"></div>
<div class="r" style="left:297.0px;top:445.1px;width:13.3px;height:10.4px;background:rgba(216,230,250,0.9);"></div>
<div class="r" style="left:310.0px;top:434.7px;width:13.3px;height:10.4px;background:rgba(228,237,251,0.6);"></div>
<div class="r" style="left:310.0px;top:445.1px;width:13.3px;height:10.4px;background:rgba(216,230,250,1.0);"></div>
<div class="t " style="left:386px;top:438.30px;font-size:8.8px;color:#555;font-weight:400;line-height:14px;">合同完成后一年内无质...</div>
<div class="t " style="left:571.5px;top:438.30px;font-size:8.8px;color:#5b9bea;font-weight:400;line-height:14px;">有限公司</div>
<div class="r" style="left:499px;top:431.3px;width:78.3px;height:29.4px;background:#fff;"></div>
<div class="r" style="left:501.0px;top:434.7px;width:15.56px;height:10.4px;background:rgba(228,237,251,0.9);"></div>
<div class="r" style="left:501.0px;top:445.1px;width:15.56px;height:10.4px;background:rgba(216,230,250,1.0);"></div>
<div class="r" style="left:516.26px;top:434.7px;width:15.56px;height:10.4px;background:rgba(228,237,251,0.6);"></div>
<div class="r" style="left:516.26px;top:445.1px;width:15.56px;height:10.4px;background:rgba(216,230,250,0.7);"></div>
<div class="r" style="left:531.52px;top:434.7px;width:15.56px;height:10.4px;background:rgba(228,237,251,0.8);"></div>
<div class="r" style="left:531.52px;top:445.1px;width:15.56px;height:10.4px;background:rgba(216,230,250,1.0);"></div>
<div class="r" style="left:546.78px;top:434.7px;width:15.56px;height:10.4px;background:rgba(228,237,251,0.8);"></div>
<div class="r" style="left:546.78px;top:445.1px;width:15.56px;height:10.4px;background:rgba(216,230,250,0.7);"></div>
<div class="r" style="left:562.04px;top:434.7px;width:15.56px;height:10.4px;background:rgba(228,237,251,0.7);"></div>
<div class="r" style="left:562.04px;top:445.1px;width:15.56px;height:10.4px;background:rgba(216,230,250,0.9);"></div>
<div class="t " style="left:642px;top:438.30px;font-size:9.2px;color:#555;font-weight:400;line-height:14px;letter-spacing:0.2px">100,000.00</div>
<div class="t " style="left:722.5px;top:438.30px;font-size:9.2px;color:#555;font-weight:400;line-height:14px;letter-spacing:0.42px">2025-06-30</div>
<div class="t " style="left:807px;top:438.30px;font-size:8.8px;color:#555;font-weight:400;line-height:14px;">未履约</div>
<div class="t " style="left:871px;top:438.30px;font-size:8.8px;color:#555;font-weight:400;line-height:14px;">未付款</div>
<div class="r" style="left:13.5px;top:489.2px;width:926.5px;height:1px;background:#f2f2f5;"></div>
<div class="t " style="left:31px;top:467.80px;font-size:9.2px;color:#555;font-weight:400;line-height:14px;transform:translateX(-50%)">7</div>
<div class="r" style="left:60px;top:467.40000000000003px;width:58.3px;height:14.4px;background:#f55b10;border-radius:2.5px"></div>
<div class="t " style="left:67.2px;top:467.60px;font-size:8.8px;color:rgba(255,255,255,0.93);font-weight:700;line-height:14px;">项目型合同</div>
<div class="r" style="left:153.1px;top:466.2px;width:43.1px;height:16.6px;background:#e3f0fd;border:1px solid #82b4e8;border-radius:2.5px"></div>
<div class="t " style="left:161.7px;top:467.60px;font-size:8.8px;color:#428ad8;font-weight:500;line-height:14px;">预付款</div>
<div class="t " style="left:229.5px;top:467.80px;font-size:8.8px;color:#5b9bea;font-weight:400;line-height:14px;">采购合同</div>
<div class="t " style="left:386px;top:467.80px;font-size:8.8px;color:#555;font-weight:400;line-height:14px;">项目启动后2周内</div>
<div class="t " style="left:571.5px;top:467.80px;font-size:8.8px;color:#5b9bea;font-weight:400;line-height:14px;">系统有限公...</div>
<div class="r" style="left:499px;top:460.8px;width:78.3px;height:29.4px;background:#fff;"></div>
<div class="r" style="left:501.0px;top:468.2px;width:15.56px;height:10.2px;background:rgba(192,214,247,0.88);"></div>
<div class="r" style="left:501.0px;top:478.40000000000003px;width:15.56px;height:6.4px;background:rgba(238,243,252,0.45);"></div>
<div class="r" style="left:516.26px;top:468.2px;width:15.56px;height:10.2px;background:rgba(192,214,247,0.95);"></div>
<div class="r" style="left:516.26px;top:478.40000000000003px;width:15.56px;height:6.4px;background:rgba(238,243,252,0.45);"></div>
<div class="r" style="left:531.52px;top:468.2px;width:15.56px;height:10.2px;background:rgba(192,214,247,0.72);"></div>
<div class="r" style="left:531.52px;top:478.40000000000003px;width:15.56px;height:6.4px;background:rgba(238,243,252,0.45);"></div>
<div class="r" style="left:546.78px;top:468.2px;width:15.56px;height:10.2px;background:rgba(192,214,247,0.88);"></div>
<div class="r" style="left:546.78px;top:478.40000000000003px;width:15.56px;height:6.4px;background:rgba(238,243,252,0.3);"></div>
<div class="r" style="left:562.04px;top:468.2px;width:15.56px;height:10.2px;background:rgba(192,214,247,0.72);"></div>
<div class="r" style="left:562.04px;top:478.40000000000003px;width:15.56px;height:6.4px;background:rgba(238,243,252,0.45);"></div>
<div class="t " style="left:642px;top:467.80px;font-size:9.2px;color:#555;font-weight:400;line-height:14px;letter-spacing:0.2px">500,000.00</div>
<div class="t " style="left:722.5px;top:467.80px;font-size:9.2px;color:#555;font-weight:400;line-height:14px;letter-spacing:0.42px">2024-07-01</div>
<div class="t " style="left:807px;top:467.80px;font-size:8.8px;color:#555;font-weight:400;line-height:14px;">已履约</div>
<div class="t " style="left:871px;top:467.80px;font-size:8.8px;color:#555;font-weight:400;line-height:14px;">已付款</div>
<div class="r" style="left:13.5px;top:518.7px;width:926.5px;height:1px;background:#f2f2f5;"></div>
<div class="t " style="left:31px;top:497.30px;font-size:9.2px;color:#555;font-weight:400;line-height:14px;transform:translateX(-50%)">8</div>
<div class="r" style="left:60px;top:496.90000000000003px;width:58.3px;height:14.4px;background:#f55b10;border-radius:2.5px"></div>
<div class="t " style="left:67.2px;top:497.10px;font-size:8.8px;color:rgba(255,255,255,0.93);font-weight:700;line-height:14px;">项目型合同</div>
<div class="t " style="left:160px;top:497.30px;font-size:8.8px;color:#555;font-weight:400;line-height:14px;">进度款</div>
<div class="t " style="left:229.5px;top:497.30px;font-size:8.8px;color:#5b9bea;font-weight:400;line-height:14px;">采购合同</div>
<div class="t " style="left:386px;top:497.30px;font-size:8.8px;color:#555;font-weight:400;line-height:14px;">项目一期执行结束</div>
<div class="t " style="left:571.5px;top:497.30px;font-size:8.8px;color:#5b9bea;font-weight:400;line-height:14px;">系统有限公...</div>
<div class="r" style="left:499px;top:490.3px;width:78.3px;height:29.4px;background:#fff;"></div>
<div class="r" style="left:501.0px;top:497.7px;width:15.56px;height:10.2px;background:rgba(192,214,247,0.88);"></div>
<div class="r" style="left:501.0px;top:507.90000000000003px;width:15.56px;height:6.4px;background:rgba(238,243,252,0.3);"></div>
<div class="r" style="left:516.26px;top:497.7px;width:15.56px;height:10.2px;background:rgba(192,214,247,1.0);"></div>
<div class="r" style="left:516.26px;top:507.90000000000003px;width:15.56px;height:6.4px;background:rgba(238,243,252,0.45);"></div>
<div class="r" style="left:531.52px;top:497.7px;width:15.56px;height:10.2px;background:rgba(192,214,247,0.88);"></div>
<div class="r" style="left:531.52px;top:507.90000000000003px;width:15.56px;height:6.4px;background:rgba(238,243,252,0.45);"></div>
<div class="r" style="left:546.78px;top:497.7px;width:15.56px;height:10.2px;background:rgba(192,214,247,0.72);"></div>
<div class="r" style="left:546.78px;top:507.90000000000003px;width:15.56px;height:6.4px;background:rgba(238,243,252,0.3);"></div>
<div class="r" style="left:562.04px;top:497.7px;width:15.56px;height:10.2px;background:rgba(192,214,247,0.8);"></div>
<div class="r" style="left:562.04px;top:507.90000000000003px;width:15.56px;height:6.4px;background:rgba(238,243,252,0.45);"></div>
<div class="t " style="left:642px;top:497.30px;font-size:9.2px;color:#555;font-weight:400;line-height:14px;letter-spacing:0.2px">2,000,000.00</div>
<div class="t " style="left:722.5px;top:497.30px;font-size:9.2px;color:#555;font-weight:400;line-height:14px;letter-spacing:0.42px">2024-08-31</div>
<div class="t " style="left:807px;top:497.30px;font-size:8.8px;color:#555;font-weight:400;line-height:14px;">已履约</div>
<div class="t " style="left:871px;top:497.30px;font-size:8.8px;color:#555;font-weight:400;line-height:14px;">未付款</div>
<div class="r" style="left:13.5px;top:548.1999999999999px;width:926.5px;height:1px;background:#f2f2f5;"></div>
<div class="t " style="left:31px;top:526.80px;font-size:9.2px;color:#555;font-weight:400;line-height:14px;transform:translateX(-50%)">9</div>
<div class="r" style="left:60px;top:526.4px;width:58.3px;height:14.4px;background:#f55b10;border-radius:2.5px"></div>
<div class="t " style="left:67.2px;top:526.60px;font-size:8.8px;color:rgba(255,255,255,0.93);font-weight:700;line-height:14px;">项目型合同</div>
<div class="t " style="left:160px;top:526.80px;font-size:8.8px;color:#555;font-weight:400;line-height:14px;">进度款</div>
<div class="t " style="left:229.5px;top:526.80px;font-size:8.8px;color:#5b9bea;font-weight:400;line-height:14px;">采购合同</div>
<div class="t " style="left:386px;top:526.80px;font-size:8.8px;color:#555;font-weight:400;line-height:14px;">项目通过中期验收</div>
<div class="t " style="left:571.5px;top:526.80px;font-size:8.8px;color:#5b9bea;font-weight:400;line-height:14px;">系统有限公...</div>
<div class="r" style="left:499px;top:519.8px;width:78.3px;height:29.4px;background:#fff;"></div>
<div class="r" style="left:501.0px;top:523.1999999999999px;width:15.56px;height:10.4px;background:rgba(228,237,251,0.7);"></div>
<div class="r" style="left:501.0px;top:533.5999999999999px;width:15.56px;height:10.4px;background:rgba(216,230,250,0.7);"></div>
<div class="r" style="left:516.26px;top:523.1999999999999px;width:15.56px;height:10.4px;background:rgba(228,237,251,0.9);"></div>
<div class="r" style="left:516.26px;top:533.5999999999999px;width:15.56px;height:10.4px;background:rgba(216,230,250,0.7);"></div>
<div class="r" style="left:531.52px;top:523.1999999999999px;width:15.56px;height:10.4px;background:rgba(228,237,251,0.7);"></div>
<div class="r" style="left:531.52px;top:533.5999999999999px;width:15.56px;height:10.4px;background:rgba(216,230,250,0.9);"></div>
<div class="r" style="left:546.78px;top:523.1999999999999px;width:15.56px;height:10.4px;background:rgba(228,237,251,0.6);"></div>
<div class="r" style="left:546.78px;top:533.5999999999999px;width:15.56px;height:10.4px;background:rgba(216,230,250,0.7);"></div>
<div class="r" style="left:562.04px;top:523.1999999999999px;width:15.56px;height:10.4px;background:rgba(228,237,251,0.9);"></div>
<div class="r" style="left:562.04px;top:533.5999999999999px;width:15.56px;height:10.4px;background:rgba(216,230,250,1.0);"></div>
<div class="t " style="left:642px;top:526.80px;font-size:9.2px;color:#555;font-weight:400;line-height:14px;letter-spacing:0.2px">1,500,000.00</div>
<div class="t " style="left:722.5px;top:526.80px;font-size:9.2px;color:#555;font-weight:400;line-height:14px;letter-spacing:0.42px">2024-12-31</div>
<div class="t " style="left:807px;top:526.80px;font-size:8.8px;color:#555;font-weight:400;line-height:14px;">已履约</div>
<div class="t " style="left:871px;top:526.80px;font-size:8.8px;color:#555;font-weight:400;line-height:14px;">已付款</div>
<div class="r" style="left:13.5px;top:577.6999999999999px;width:926.5px;height:1px;background:#f2f2f5;"></div>
<div class="t " style="left:31px;top:556.30px;font-size:9.2px;color:#555;font-weight:400;line-height:14px;transform:translateX(-50%)">10</div>
<div class="r" style="left:60px;top:555.9px;width:58.3px;height:14.4px;background:#f55b10;border-radius:2.5px"></div>
<div class="t " style="left:67.2px;top:556.10px;font-size:8.8px;color:rgba(255,255,255,0.93);font-weight:700;line-height:14px;">项目型合同</div>
<div class="t " style="left:160px;top:556.30px;font-size:8.8px;color:#555;font-weight:400;line-height:14px;">尾款</div>
<div class="t " style="left:229.5px;top:556.30px;font-size:8.8px;color:#5b9bea;font-weight:400;line-height:14px;">采购合同</div>
<div class="t " style="left:386px;top:556.30px;font-size:8.8px;color:#555;font-weight:400;line-height:14px;">项目收尾并通过验收</div>
<div class="t " style="left:571.5px;top:556.30px;font-size:8.8px;color:#5b9bea;font-weight:400;line-height:14px;">系统有限公...</div>
<div class="r" style="left:499px;top:549.3px;width:78.3px;height:29.4px;background:#fff;"></div>
<div class="r" style="left:501.0px;top:556.6999999999999px;width:15.56px;height:10.2px;background:rgba(192,214,247,0.72);"></div>
<div class="r" style="left:501.0px;top:566.9px;width:15.56px;height:6.4px;background:rgba(238,243,252,0.45);"></div>
<div class="r" style="left:516.26px;top:556.6999999999999px;width:15.56px;height:10.2px;background:rgba(192,214,247,0.95);"></div>
<div class="r" style="left:516.26px;top:566.9px;width:15.56px;height:6.4px;background:rgba(238,243,252,0.3);"></div>
<div class="r" style="left:531.52px;top:556.6999999999999px;width:15.56px;height:10.2px;background:rgba(192,214,247,0.95);"></div>
<div class="r" style="left:531.52px;top:566.9px;width:15.56px;height:6.4px;background:rgba(238,243,252,0.45);"></div>
<div class="r" style="left:546.78px;top:556.6999999999999px;width:15.56px;height:10.2px;background:rgba(192,214,247,0.88);"></div>
<div class="r" style="left:546.78px;top:566.9px;width:15.56px;height:6.4px;background:rgba(238,243,252,0.6);"></div>
<div class="r" style="left:562.04px;top:556.6999999999999px;width:15.56px;height:10.2px;background:rgba(192,214,247,0.72);"></div>
<div class="r" style="left:562.04px;top:566.9px;width:15.56px;height:6.4px;background:rgba(238,243,252,0.6);"></div>
<div class="t " style="left:642px;top:556.30px;font-size:9.2px;color:#555;font-weight:400;line-height:14px;letter-spacing:0.2px">1,000,000.00</div>
<div class="t " style="left:722.5px;top:556.30px;font-size:9.2px;color:#555;font-weight:400;line-height:14px;letter-spacing:0.42px">2025-03-31</div>
<div class="t " style="left:807px;top:556.30px;font-size:8.8px;color:#555;font-weight:400;line-height:14px;">未履约</div>
<div class="t " style="left:871px;top:556.30px;font-size:8.8px;color:#555;font-weight:400;line-height:14px;">未付款</div>
<div class="r" style="left:13.5px;top:607.1999999999999px;width:926.5px;height:1px;background:#f2f2f5;"></div>
<div class="t " style="left:31px;top:585.80px;font-size:9.2px;color:#555;font-weight:400;line-height:14px;transform:translateX(-50%)">11</div>
<div class="r" style="left:60px;top:585.4px;width:58.3px;height:14.4px;background:#f55b10;border-radius:2.5px"></div>
<div class="t " style="left:67.2px;top:585.60px;font-size:8.8px;color:rgba(255,255,255,0.93);font-weight:700;line-height:14px;">项目型合同</div>
<div class="t " style="left:160px;top:585.80px;font-size:8.8px;color:#555;font-weight:400;line-height:14px;">首付款</div>
<div class="t " style="left:386px;top:585.80px;font-size:8.8px;color:#555;font-weight:400;line-height:14px;">测试001</div>
<div class="t " style="left:571.5px;top:585.80px;font-size:8.8px;color:#5b9bea;font-weight:400;line-height:14px;">有限公司</div>
<div class="r" style="left:499px;top:578.8px;width:78.3px;height:27.5px;background:#fff;"></div>
<div class="r" style="left:501.0px;top:586.1999999999999px;width:15.56px;height:10.2px;background:rgba(192,214,247,0.88);"></div>
<div class="r" style="left:501.0px;top:596.4px;width:15.56px;height:6.4px;background:rgba(238,243,252,0.3);"></div>
<div class="r" style="left:516.26px;top:586.1999999999999px;width:15.56px;height:10.2px;background:rgba(192,214,247,1.0);"></div>
<div class="r" style="left:516.26px;top:596.4px;width:15.56px;height:6.4px;background:rgba(238,243,252,0.45);"></div>
<div class="r" style="left:531.52px;top:586.1999999999999px;width:15.56px;height:10.2px;background:rgba(192,214,247,1.0);"></div>
<div class="r" style="left:531.52px;top:596.4px;width:15.56px;height:6.4px;background:rgba(238,243,252,0.3);"></div>
<div class="r" style="left:546.78px;top:586.1999999999999px;width:15.56px;height:10.2px;background:rgba(192,214,247,0.95);"></div>
<div class="r" style="left:546.78px;top:596.4px;width:15.56px;height:6.4px;background:rgba(238,243,252,0.45);"></div>
<div class="r" style="left:562.04px;top:586.1999999999999px;width:15.56px;height:10.2px;background:rgba(192,214,247,1.0);"></div>
<div class="r" style="left:562.04px;top:596.4px;width:15.56px;height:6.4px;background:rgba(238,243,252,0.3);"></div>
<div class="t " style="left:642px;top:585.80px;font-size:9.2px;color:#555;font-weight:400;line-height:14px;letter-spacing:0.2px">30,000.00</div>
<div class="t " style="left:722.5px;top:585.80px;font-size:9.2px;color:#555;font-weight:400;line-height:14px;letter-spacing:0.42px">2025-05-15</div>
<div class="t " style="left:807px;top:585.80px;font-size:8.8px;color:#555;font-weight:400;line-height:14px;">未履约</div>
<div class="t " style="left:871px;top:585.80px;font-size:8.8px;color:#555;font-weight:400;line-height:14px;">未付款</div>
<div class="r" style="left:60px;top:614.8px;width:58.5px;height:2.6px;background:#2fc582;border-radius:2px 2px 0 0"></div>
<div class="r" style="left:13.5px;top:622.3px;width:926.5px;height:1px;background:#f0f0f3;"></div>
<div class="t " style="left:758px;top:631.00px;font-size:8.8px;color:#888;font-weight:400;line-height:14px;">共13条</div>
<svg style="left:794px;top:634px" width="8" height="8" viewBox="0 0 8 8" fill="none" stroke="#c4c6cc" stroke-width="0.9"><path d="M1 0.6v6.8M6.6 0.8L3.2 4l3.4 3.2"/></svg>
<svg style="left:813px;top:634px" width="6" height="8" viewBox="0 0 6 8" fill="none" stroke="#c4c6cc" stroke-width="0.9"><path d="M4.6 0.8L1.2 4l3.4 3.2"/></svg>
<div class="t " style="left:832.5px;top:631.00px;font-size:8.8px;color:#8fb3e6;font-weight:400;line-height:14px;">1/1</div>
<svg style="left:856px;top:634px" width="6" height="8" viewBox="0 0 6 8" fill="none" stroke="#c4c6cc" stroke-width="0.9"><path d="M1.4 0.8L4.8 4L1.4 7.2"/></svg>
<svg style="left:872px;top:634px" width="8" height="8" viewBox="0 0 8 8" fill="none" stroke="#c4c6cc" stroke-width="0.9"><path d="M7 0.6v6.8M1.4 0.8L4.8 4L1.4 7.2"/></svg>
<div class="r" style="left:888px;top:629.5px;width:40px;height:17px;background:#fff;border:1px solid #eceef2;border-radius:2px"></div>
<div class="t " style="left:893.5px;top:631.00px;font-size:9.200000000000001px;color:#333;font-weight:500;line-height:14px;">50</div>
<svg style="left:909px;top:635.6px" width="7" height="5" viewBox="0 0 7 5" fill="none" stroke="#aaa" stroke-width="0.9"><path d="M0.5 0.7L3.5 3.8L6.5 0.7"/></svg>
<div class="r" style="left:-9px;top:620.5px;width:20px;height:21px;background:#fff;border-radius:50%;box-shadow:0 0 3px rgba(0,0,0,0.18)"></div>
<div class="r" style="left:912.7px;top:275px;width:362.3px;height:475px;background:#fff;"></div>
<div class="t " style="left:1109.8px;top:284.20px;font-size:15px;color:#1a1a1a;font-weight:700;line-height:22px;transform:translateX(-50%)">采购履约计划</div>
<div class="r" style="left:935px;top:317.8px;width:1.5px;height:9.4px;background:#333;"></div>
<div class="t " style="left:941px;top:314.80px;font-size:10.2px;color:#1a1a1a;font-weight:700;line-height:15px;">基本信息</div>
<div class="r" style="left:929px;top:337.7px;width:346px;height:1px;background:#eef0f4;"></div>
<div class="r" style="left:929px;top:338.7px;width:62.5px;height:21.7px;background:#f5f6fa;"></div>
<div class="r" style="left:991.0px;top:337.7px;width:1px;height:22.7px;background:#eef0f4;"></div>
<div class="t " style="left:939.5px;top:344.05px;font-size:7.45px;color:#505050;font-weight:500;line-height:11px;">里程碑概述</div>
<div class="t " style="left:994px;top:344.05px;font-size:7.45px;color:#333;font-weight:500;line-height:11px;">首付款付款</div>
<div class="r" style="left:929px;top:360.4px;width:346px;height:1px;background:#eef0f4;"></div>
<div class="r" style="left:929px;top:361.4px;width:62.5px;height:21.7px;background:#f5f6fa;"></div>
<div class="r" style="left:991.0px;top:360.4px;width:1px;height:22.7px;background:#eef0f4;"></div>
<div class="t " style="left:939.5px;top:366.75px;font-size:7.45px;color:#505050;font-weight:500;line-height:11px;">合同业务模式</div>
<div class="t " style="left:994px;top:366.75px;font-size:7.45px;color:#333;font-weight:500;line-height:11px;">定期定价合同</div>
<div class="r" style="left:1109px;top:361.4px;width:63.5px;height:21.7px;background:#f5f6fa;"></div>
<div class="r" style="left:1108.5px;top:360.4px;width:1px;height:22.7px;background:#eef0f4;"></div>
<div class="r" style="left:1172.0px;top:360.4px;width:1px;height:22.7px;background:#eef0f4;"></div>
<div class="t " style="left:1120px;top:366.75px;font-size:7.45px;color:#505050;font-weight:500;line-height:11px;">款项类型</div>
<div class="t " style="left:1174.5px;top:366.75px;font-size:7.45px;color:#333;font-weight:500;line-height:11px;">首付款</div>
<div class="r" style="left:929px;top:383.09999999999997px;width:346px;height:1px;background:#eef0f4;"></div>
<div class="r" style="left:929px;top:384.09999999999997px;width:62.5px;height:21.7px;background:#f5f6fa;"></div>
<div class="r" style="left:991.0px;top:383.09999999999997px;width:1px;height:22.7px;background:#eef0f4;"></div>
<div class="t " style="left:939.5px;top:389.45px;font-size:7.45px;color:#505050;font-weight:500;line-height:11px;">款项金额</div>
<div class="t " style="left:994px;top:389.45px;font-size:7.45px;color:#333;font-weight:500;line-height:11px;"><span style="font-size:8.6px;letter-spacing:-0.33px">6,000,000.00</span></div>
<div class="r" style="left:1109px;top:384.09999999999997px;width:63.5px;height:21.7px;background:#f5f6fa;"></div>
<div class="r" style="left:1108.5px;top:383.09999999999997px;width:1px;height:22.7px;background:#eef0f4;"></div>
<div class="r" style="left:1172.0px;top:383.09999999999997px;width:1px;height:22.7px;background:#eef0f4;"></div>
<div class="t " style="left:1120px;top:389.45px;font-size:7.45px;color:#505050;font-weight:500;line-height:11px;">期望付款日期</div>
<div class="t " style="left:1174.5px;top:389.45px;font-size:7.45px;color:#333;font-weight:500;line-height:11px;"><span style="font-size:8.6px;letter-spacing:-0.33px">2025-02-13</span></div>
<div class="r" style="left:929px;top:405.79999999999995px;width:346px;height:1px;background:#eef0f4;"></div>
<div class="r" style="left:929px;top:406.79999999999995px;width:62.5px;height:21.7px;background:#f5f6fa;"></div>
<div class="r" style="left:991.0px;top:405.79999999999995px;width:1px;height:22.7px;background:#eef0f4;"></div>
<div class="t " style="left:939.5px;top:412.15px;font-size:7.45px;color:#505050;font-weight:500;line-height:11px;">履约状态</div>
<div class="t " style="left:994px;top:412.15px;font-size:7.45px;color:#333;font-weight:500;line-height:11px;">未履约</div>
<div class="r" style="left:1109px;top:406.79999999999995px;width:63.5px;height:21.7px;background:#f5f6fa;"></div>
<div class="r" style="left:1108.5px;top:405.79999999999995px;width:1px;height:22.7px;background:#eef0f4;"></div>
<div class="r" style="left:1172.0px;top:405.79999999999995px;width:1px;height:22.7px;background:#eef0f4;"></div>
<div class="t " style="left:1120px;top:412.15px;font-size:7.45px;color:#505050;font-weight:500;line-height:11px;">结算/核销状态</div>
<div class="t " style="left:1174.5px;top:412.15px;font-size:7.45px;color:#333;font-weight:500;line-height:11px;">未结算</div>
<div class="r" style="left:929px;top:428.5px;width:346px;height:1px;background:#eef0f4;"></div>
<div class="r" style="left:929px;top:429.5px;width:62.5px;height:21.7px;background:#f5f6fa;"></div>
<div class="r" style="left:991.0px;top:428.5px;width:1px;height:22.7px;background:#eef0f4;"></div>
<div class="t " style="left:939.5px;top:434.85px;font-size:7.45px;color:#505050;font-weight:500;line-height:11px;">付款状态</div>
<div class="t " style="left:994px;top:434.85px;font-size:7.45px;color:#333;font-weight:500;line-height:11px;">未付款</div>
<div class="r" style="left:1109px;top:429.5px;width:63.5px;height:21.7px;background:#f5f6fa;"></div>
<div class="r" style="left:1108.5px;top:428.5px;width:1px;height:22.7px;background:#eef0f4;"></div>
<div class="r" style="left:1172.0px;top:428.5px;width:1px;height:22.7px;background:#eef0f4;"></div>
<div class="r" style="left:929px;top:451.2px;width:346px;height:1px;background:#eef0f4;"></div>
<div class="r" style="left:935px;top:462.2px;width:1.5px;height:9.4px;background:#333;"></div>
<div class="t " style="left:941px;top:459.20px;font-size:10.2px;color:#1a1a1a;font-weight:700;line-height:15px;">合同信息</div>
<div class="r" style="left:929px;top:481.6px;width:346px;height:1px;background:#eef0f4;"></div>
<div class="r" style="left:929px;top:482.6px;width:62.5px;height:21.05px;background:#f5f6fa;"></div>
<div class="r" style="left:991.0px;top:481.6px;width:1px;height:22.05px;background:#eef0f4;"></div>
<div class="t " style="left:939.5px;top:487.62px;font-size:7.45px;color:#505050;font-weight:500;line-height:11px;">合同名称</div>
<div class="t " style="left:1060.75px;top:487.62px;font-size:7.45px;color:#333;font-weight:500;line-height:11px;">司采购合同</div>
<div class="r" style="left:1058px;top:485.6px;width:6.2px;height:15px;background:#fff;"></div>
<div class="r" style="left:994.4px;top:487.5px;width:9.03px;height:12px;background:rgb(219,219,219);"></div>
<div class="r" style="left:1003.12px;top:487.5px;width:9.03px;height:12px;background:rgb(208,208,208);"></div>
<div class="r" style="left:1011.85px;top:487.5px;width:9.03px;height:12px;background:rgb(211,211,211);"></div>
<div class="r" style="left:1020.57px;top:487.5px;width:9.03px;height:12px;background:rgb(220,220,220);"></div>
<div class="r" style="left:1029.3px;top:487.5px;width:9.03px;height:12px;background:rgb(216,216,216);"></div>
<div class="r" style="left:1038.03px;top:487.5px;width:9.03px;height:12px;background:rgb(200,200,200);"></div>
<div class="r" style="left:1046.75px;top:487.5px;width:9.03px;height:12px;background:rgb(214,214,214);"></div>
<div class="r" style="left:1055.47px;top:487.5px;width:9.03px;height:12px;background:rgb(207,207,207);"></div>
<div class="r" style="left:929px;top:503.65000000000003px;width:346px;height:1px;background:#eef0f4;"></div>
<div class="r" style="left:929px;top:504.65000000000003px;width:62.5px;height:21.05px;background:#f5f6fa;"></div>
<div class="r" style="left:991.0px;top:503.65000000000003px;width:1px;height:22.05px;background:#eef0f4;"></div>
<div class="t " style="left:939.5px;top:509.68px;font-size:7.45px;color:#505050;font-weight:500;line-height:11px;">相对方主体</div>
<div class="r" style="left:1109px;top:504.65000000000003px;width:63.5px;height:21.05px;background:#f5f6fa;"></div>
<div class="r" style="left:1108.5px;top:503.65000000000003px;width:1px;height:22.05px;background:#eef0f4;"></div>
<div class="r" style="left:1172.0px;top:503.65000000000003px;width:1px;height:22.05px;background:#eef0f4;"></div>
<div class="t " style="left:1120px;top:509.68px;font-size:7.45px;color:#505050;font-weight:500;line-height:11px;">我方签约主体</div>
<div class="t " style="left:1174.5px;top:509.68px;font-size:7.45px;color:#333;font-weight:500;line-height:11px;">今承达合同管理</div>
<div class="t " style="left:1038.2px;top:509.68px;font-size:7.45px;color:#333;font-weight:500;line-height:11px;">有限公司</div>
<div class="r" style="left:1036px;top:507.65000000000003px;width:5.3px;height:15px;background:#fff;"></div>
<div class="r" style="left:992.0px;top:510.7px;width:8.52px;height:9px;background:rgb(210,210,210);"></div>
<div class="r" style="left:1000.22px;top:510.7px;width:8.52px;height:9px;background:rgb(215,215,215);"></div>
<div class="r" style="left:1008.43px;top:510.7px;width:8.52px;height:9px;background:rgb(207,207,207);"></div>
<div class="r" style="left:1016.65px;top:510.7px;width:8.52px;height:9px;background:rgb(204,204,204);"></div>
<div class="r" style="left:1024.87px;top:510.7px;width:8.52px;height:9px;background:rgb(200,200,200);"></div>
<div class="r" style="left:1033.08px;top:510.7px;width:8.52px;height:9px;background:rgb(201,201,201);"></div>
<div class="r" style="left:929px;top:525.7px;width:346px;height:1px;background:#eef0f4;"></div>
<div class="r" style="left:929px;top:526.7px;width:62.5px;height:21.05px;background:#f5f6fa;"></div>
<div class="r" style="left:991.0px;top:525.7px;width:1px;height:22.05px;background:#eef0f4;"></div>
<div class="t " style="left:939.5px;top:531.73px;font-size:7.45px;color:#505050;font-weight:500;line-height:11px;">付款条件</div>
<div class="t " style="left:994px;top:531.73px;font-size:7.45px;color:#333;font-weight:500;line-height:11px;">首付款<span style="font-size:8.6px;letter-spacing:-0.33px">30%</span>。验收款<span style="font-size:8.6px;letter-spacing:-0.33px">70%</span></div>
<div class="r" style="left:929px;top:547.75px;width:346px;height:1px;background:#eef0f4;"></div>
<div class="r" style="left:929px;top:548.75px;width:62.5px;height:21.05px;background:#f5f6fa;"></div>
<div class="r" style="left:991.0px;top:547.75px;width:1px;height:22.05px;background:#eef0f4;"></div>
<div class="t " style="left:939.5px;top:553.77px;font-size:7.45px;color:#505050;font-weight:500;line-height:11px;">合同含税金额</div>
<div class="t " style="left:994px;top:553.77px;font-size:7.45px;color:#333;font-weight:500;line-height:11px;"><span style="font-size:8.6px;letter-spacing:-0.33px">6,000,000.00</span></div>
<div class="r" style="left:1109px;top:548.75px;width:63.5px;height:21.05px;background:#f5f6fa;"></div>
<div class="r" style="left:1108.5px;top:547.75px;width:1px;height:22.05px;background:#eef0f4;"></div>
<div class="r" style="left:1172.0px;top:547.75px;width:1px;height:22.05px;background:#eef0f4;"></div>
<div class="t " style="left:1120px;top:553.77px;font-size:7.45px;color:#505050;font-weight:500;line-height:11px;">款项比例</div>
<div class="t " style="left:1174.5px;top:553.77px;font-size:7.45px;color:#333;font-weight:500;line-height:11px;"><span style="font-size:8.6px;letter-spacing:-0.33px">30.00%</span></div>
<div class="r" style="left:929px;top:569.8000000000001px;width:346px;height:1px;background:#eef0f4;"></div>
<div class="r" style="left:935px;top:581.0px;width:1.5px;height:9.4px;background:#333;"></div>
<div class="t " style="left:941px;top:578.00px;font-size:10.2px;color:#1a1a1a;font-weight:700;line-height:15px;">履约和验收信息</div>
<div class="r" style="left:929px;top:600.9px;width:346px;height:1px;background:#eef0f4;"></div>
<div class="r" style="left:929px;top:601.9px;width:62.5px;height:20.9px;background:#f5f6fa;"></div>
<div class="r" style="left:991.0px;top:600.9px;width:1px;height:21.9px;background:#eef0f4;"></div>
<div class="t " style="left:939.5px;top:606.85px;font-size:7.45px;color:#505050;font-weight:500;line-height:11px;">预期执行效果</div>
<div class="t " style="left:994px;top:606.85px;font-size:7.45px;color:#333;font-weight:500;line-height:11px;">在期望付款日期前完成付款</div>
<div class="r" style="left:929px;top:622.8px;width:346px;height:1px;background:#eef0f4;"></div>
<div class="r" style="left:929px;top:623.8px;width:62.5px;height:20.9px;background:#f5f6fa;"></div>
<div class="r" style="left:991.0px;top:622.8px;width:1px;height:21.9px;background:#eef0f4;"></div>
<div class="t " style="left:939.5px;top:628.75px;font-size:7.45px;color:#505050;font-weight:500;line-height:11px;">验收地点</div>
<div class="t " style="left:994px;top:628.75px;font-size:7.45px;color:#333;font-weight:500;line-height:11px;"><span style="font-size:8.6px;letter-spacing:-0.33px">XX</span>号</div>
<div class="r" style="left:1109px;top:623.8px;width:63.5px;height:20.9px;background:#f5f6fa;"></div>
<div class="r" style="left:1108.5px;top:622.8px;width:1px;height:21.9px;background:#eef0f4;"></div>
<div class="r" style="left:1172.0px;top:622.8px;width:1px;height:21.9px;background:#eef0f4;"></div>
<div class="t " style="left:1120px;top:628.75px;font-size:7.45px;color:#505050;font-weight:500;line-height:11px;">验收方式</div>
<div class="t " style="left:1174.5px;top:628.75px;font-size:7.45px;color:#333;font-weight:500;line-height:11px;">签字验收</div>
<div class="r" style="left:929px;top:644.6999999999999px;width:346px;height:1px;background:#eef0f4;"></div>
<div class="r" style="left:929px;top:645.6999999999999px;width:62.5px;height:20.9px;background:#f5f6fa;"></div>
<div class="r" style="left:991.0px;top:644.6999999999999px;width:1px;height:21.9px;background:#eef0f4;"></div>
<div class="t " style="left:939.5px;top:650.65px;font-size:7.45px;color:#505050;font-weight:500;line-height:11px;">验收人</div>
<div class="t " style="left:994px;top:650.65px;font-size:7.45px;color:#333;font-weight:500;line-height:11px;">[演示账号] 刘俊</div>
<div class="r" style="left:1109px;top:645.6999999999999px;width:63.5px;height:20.9px;background:#f5f6fa;"></div>
<div class="r" style="left:1108.5px;top:644.6999999999999px;width:1px;height:21.9px;background:#eef0f4;"></div>
<div class="r" style="left:1172.0px;top:644.6999999999999px;width:1px;height:21.9px;background:#eef0f4;"></div>
<div class="r" style="left:929px;top:666.5999999999999px;width:346px;height:1px;background:#eef0f4;"></div>
<div class="r" style="left:935px;top:677.5px;width:1.5px;height:9.4px;background:#333;"></div>
<div class="t " style="left:941px;top:674.50px;font-size:10.2px;color:#1a1a1a;font-weight:700;line-height:15px;">收款信息</div>
<div class="r" style="left:929px;top:697.3px;width:346px;height:1px;background:#eef0f4;"></div>
<div class="r" style="left:929px;top:698.3px;width:62.5px;height:26.8px;background:#f5f6fa;"></div>
<div class="r" style="left:991.0px;top:697.3px;width:1px;height:27.8px;background:#eef0f4;"></div>
<div class="t " style="left:939.5px;top:706.20px;font-size:7.45px;color:#505050;font-weight:500;line-height:11px;">收款单位</div>
<div class="r" style="left:1109px;top:698.3px;width:63.5px;height:26.8px;background:#f5f6fa;"></div>
<div class="r" style="left:1108.5px;top:697.3px;width:1px;height:27.8px;background:#eef0f4;"></div>
<div class="r" style="left:1172.0px;top:697.3px;width:1px;height:27.8px;background:#eef0f4;"></div>
<div class="t " style="left:1120px;top:700.10px;font-size:7.45px;color:#505050;font-weight:500;line-height:11.6px;">收款单位银行<br>账号</div>
<div class="r" style="left:929px;top:725.0999999999999px;width:346px;height:1px;background:#eef0f4;"></div>
<div class="t " style="left:1053.1px;top:706.20px;font-size:7.45px;color:#333;font-weight:500;line-height:11px;">公司</div>
<div class="r" style="left:1050px;top:703.3px;width:6.5px;height:16px;background:#fff;"></div>
<div class="r" style="left:994.4px;top:701.3px;width:9.17px;height:9.7px;background:rgb(228,228,228);"></div>
<div class="r" style="left:1003.27px;top:701.3px;width:9.17px;height:9.7px;background:rgb(228,228,228);"></div>
<div class="r" style="left:1012.14px;top:701.3px;width:9.17px;height:9.7px;background:rgb(234,234,234);"></div>
<div class="r" style="left:1021.01px;top:701.3px;width:9.17px;height:9.7px;background:rgb(234,234,234);"></div>
<div class="r" style="left:1029.89px;top:701.3px;width:9.17px;height:9.7px;background:rgb(236,236,236);"></div>
<div class="r" style="left:1038.76px;top:701.3px;width:9.17px;height:9.7px;background:rgb(237,237,237);"></div>
<div class="r" style="left:1047.63px;top:701.3px;width:9.17px;height:9.7px;background:rgb(226,226,226);"></div>
<div class="r" style="left:994.4px;top:711px;width:9.17px;height:9.7px;background:rgb(211,211,211);"></div>
<div class="r" style="left:1003.27px;top:711px;width:9.17px;height:9.7px;background:rgb(224,224,224);"></div>
<div class="r" style="left:1012.14px;top:711px;width:9.17px;height:9.7px;background:rgb(215,215,215);"></div>
<div class="r" style="left:1021.01px;top:711px;width:9.17px;height:9.7px;background:rgb(216,216,216);"></div>
<div class="r" style="left:1029.89px;top:711px;width:9.17px;height:9.7px;background:rgb(216,216,216);"></div>
<div class="r" style="left:1038.76px;top:711px;width:9.17px;height:9.7px;background:rgb(217,217,217);"></div>
<div class="r" style="left:1047.63px;top:711px;width:9.17px;height:9.7px;background:rgb(210,210,210);"></div>
<div class="r" style="left:1275px;top:62px;width:2px;height:690px;background:#f1f2f6;"></div>
</body></html>
